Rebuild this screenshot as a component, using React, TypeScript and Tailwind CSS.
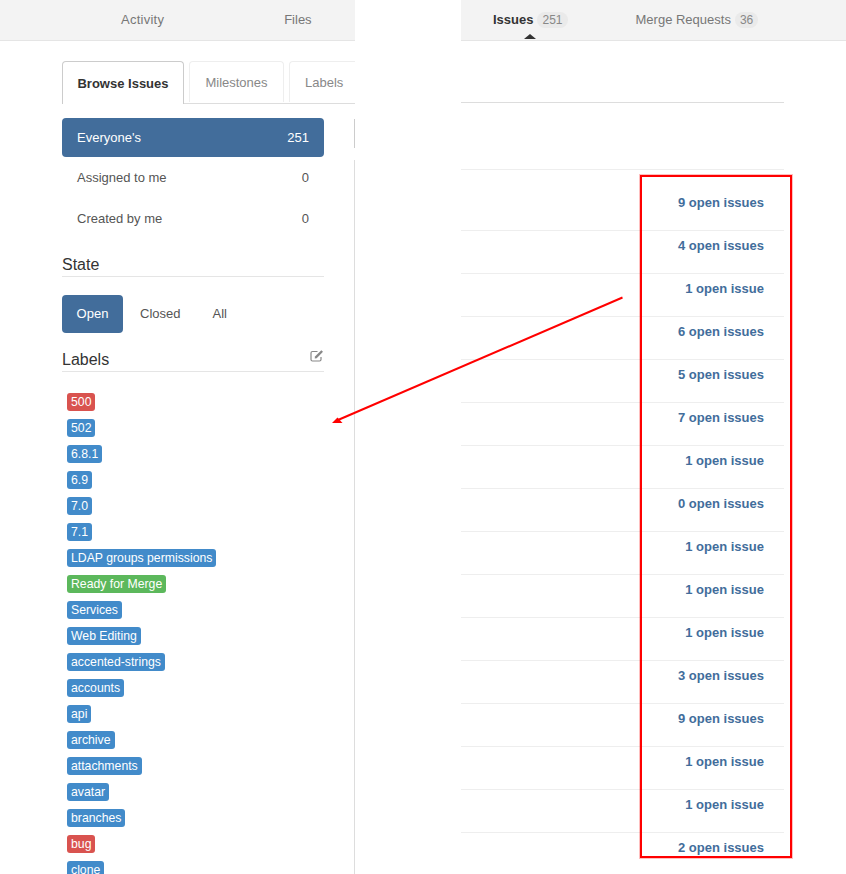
import React from "react";

const labels: [string, string][] = [
  ["500", "r"], ["502", "b"], ["6.8.1", "b"], ["6.9", "b"], ["7.0", "b"], ["7.1", "b"],
  ["LDAP groups permissions", "b"], ["Ready for Merge", "g"], ["Services", "b"], ["Web Editing", "b"],
  ["accented-strings", "b"], ["accounts", "b"], ["api", "b"], ["archive", "b"], ["attachments", "b"],
  ["avatar", "b"], ["branches", "b"], ["bug", "r"], ["clone", "b"],
];
const counts = [
  "9 open issues", "4 open issues", "1 open issue", "6 open issues", "5 open issues", "7 open issues",
  "1 open issue", "0 open issues", "1 open issue", "1 open issue", "1 open issue", "3 open issues",
  "9 open issues", "1 open issue", "1 open issue", "2 open issues",
];
const colour: Record<string, string> = { r: "bg-[#d9534f]", b: "bg-[#428bca]", g: "bg-[#5cb85c]" };

export default function App() {
  return (
    <div className="relative flex h-[874px] w-[846px] overflow-hidden bg-white font-['Liberation_Sans',Arial,sans-serif] text-[13px] text-[#555]">
      <div className="flex w-[355px] shrink-0 flex-col">
        <div className="flex h-[41px] shrink-0 border-b border-[#e5e5e5] bg-[#f3f3f3] text-[#777]">
          <span className="ml-[121px] mt-[10px] tracking-[0.25px]">Activity</span>
          <span className="ml-[120px] mt-[10px]">Files</span>
        </div>
        <div className="flex min-h-0 flex-1">
          <div className="ml-[62px] w-[262px] shrink-0">
            <div className="mt-5 flex w-[293px] gap-[5px] border-b border-[#ddd]">
              <span className="mb-[-1px] flex h-[43px] w-[122px] shrink-0 items-center justify-center rounded-t border border-b-0 border-[#ccc] bg-white pt-[1px] font-bold text-[#333]">Browse Issues</span>
              <span className="flex h-[41px] w-[95px] shrink-0 items-center justify-center rounded-t border border-b-0 border-[#eee] pt-[1px] text-[#888]">Milestones</span>
              <span className="flex h-[41px] flex-1 items-center rounded-tl border-l border-t border-[#eee] pl-[15px] pt-[1px] text-[#888]">Labels</span>
            </div>
            <div className="mt-[14px] flex flex-col">
              <div className="flex h-[39px] items-center justify-between rounded bg-[#426d9b] px-[15px] text-white"><span>Everyone's</span><span>251</span></div>
              <div className="mt-[1px] flex h-[40px] items-center justify-between px-[15px]"><span>Assigned to me</span><span>0</span></div>
              <div className="mt-[1px] flex h-[40px] items-center justify-between px-[15px]"><span>Created by me</span><span>0</span></div>
            </div>
            <div className="mt-[16px] border-b border-[#e5e5e5] pb-[2px] text-[16px] leading-[19px] text-[#333]">State</div>
            <div className="mt-[18px] flex h-[38px] items-center">
              <span className="flex h-[38px] w-[61px] items-center justify-center rounded bg-[#426d9b] text-white">Open</span>
              <span className="ml-[17px]">Closed</span>
              <span className="ml-[32px]">All</span>
            </div>
            <div className="mt-[17px] flex items-start justify-between border-b border-[#e5e5e5] pb-[2px] text-[16px] leading-[19px] text-[#333]">
              <span>Labels</span>
              <svg width="14" height="13" viewBox="0 0 14 13" fill="none" className="mt-[-1px]">
                <path d="M7.500 2.500H2.500a1.500 1.500 0 0 0-1.500 1.500v6.500A1.500 1.500 0 0 0 2.500 12h7a1.500 1.500 0 0 0 1.500-1.500V8" stroke="#888" strokeWidth="1.2" />
                <path d="M5 7.500 11.300 1.200l1.700 1.600L6.700 9.200 4.700 9.600Z" fill="#888" />
              </svg>
            </div>
            <div className="mt-[21px] flex flex-col items-start gap-2 pl-[5px]">
              {labels.map(([t, c]) => (
                <span key={t} className={`flex h-[18px] shrink-0 items-center rounded-[3px] px-1 text-[12.25px] text-white ${colour[c]}`}>{t}</span>
              ))}
            </div>
          </div>
          <div className="ml-[30px] w-[1px] shrink-0 flex-col pt-[78px]">
            <div className="h-[29px] bg-[#ccc]" />
            <div className="mt-[12px] h-[800px] bg-[#ddd]" />
          </div>
        </div>
      </div>
      <div className="ml-[106px] flex w-[385px] shrink-0 flex-col">
        <div className="flex h-[41px] shrink-0 items-center overflow-hidden border-b border-[#e5e5e5] bg-[#f3f3f3] text-[#777]">
          <span className="relative ml-[32px] font-bold text-[#333]">
            Issues
            <span className="absolute left-[31px] top-[24px] h-0 w-0 border-x-[6px] border-b-[5px] border-x-transparent border-b-[#333]" />
          </span>
          <span className="ml-[4px] rounded-full bg-[#eaeaea] px-[5px] text-[12px] leading-[16px] text-[#888]">251</span>
          <span className="ml-[68px]">Merge Requests</span>
          <span className="ml-[4px] rounded-full bg-[#eaeaea] px-[5px] text-[12px] leading-[16px] text-[#888]">36</span>
        </div>
        <div className="w-[323px]">
          <div className="mt-[61px] h-[1px] bg-[#ddd]" />
          <div className="mt-[66px] h-[1px] bg-[#eee]" />
          <div>
            {counts.map((c, i) => (
              <div key={i} className={`flex items-start justify-end border-b border-[#eee] pr-5 font-bold leading-[16px] text-[#426d9b] last:border-b-0 ${i === 0 ? "h-[61px] pt-[25px]" : "h-[43px] pt-[7px]"}`}>
                {c}
              </div>
            ))}
          </div>
        </div>
      </div>
      <div className="absolute left-[640px] top-[175px] h-[683px] w-[152px] border-2 border-[#f00] shadow-[0_0_0_1px_rgba(255,0,0,0.25)]" />
      <svg className="absolute left-[325px] top-[290px]" width="305" height="140" viewBox="0 0 305 140" fill="none">
        <path d="M297.500 7.500 13 130" stroke="#f00" strokeWidth="2" />
        <path d="M7 133 12.500 127.500 17.500 133Z" fill="#f00" />
      </svg>
    </div>
  );
}
